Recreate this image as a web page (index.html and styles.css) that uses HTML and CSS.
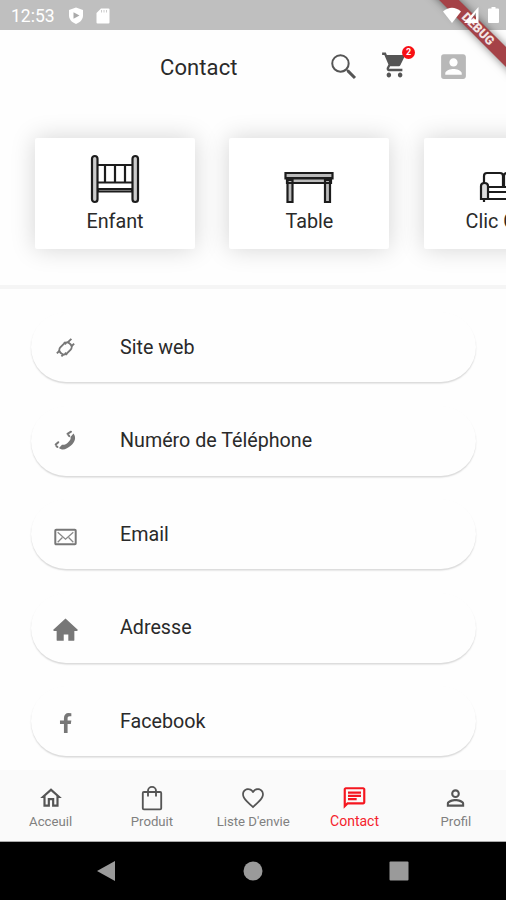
FILE: index.html
```html
<!DOCTYPE html>
<html lang="fr">
<head>
    <meta charset="UTF-8">
    <meta name="viewport" content="width=device-width, initial-scale=1.0">
    <title>Contact</title>
    <link rel="stylesheet" href="styles.css">
</head>
<body>
    <div class="screen">
        <!-- Status bar -->
        <div class="status-bar">
            <span class="time">12:53</span>
            <svg class="shield" viewBox="0 0 16 18"><path fill="#fff" d="M8 0.5 15 3v5.500c0 4-3 7-7 8.500-4-1.500-7-4.500-7-8.500V3z"/><path fill="#aaa" d="M5.500 5.300v6.400L11.500 8.500z"/></svg>
            <svg class="sd" viewBox="0 0 14 16"><path fill="#fff" d="M5 .5h7.500q1 0 1 1v13q0 1-1 1h-11q-1 0-1-1V5z"/><path stroke="#ccc" stroke-width="1" d="M5.500 2v2.500M8 2v2.500M10.500 2v2.500"/></svg>
        </div>
        <div class="debug">DEBUG</div>
        <svg class="signals" viewBox="0 0 60 20">
            <path fill="#fff" d="M0 5.500Q9 -2 18 5.500L9 17z"/>
            <path fill="#fff" fill-rule="evenodd" d="M35.500 1v16H21zM33 6.500v7H28z"/>
            <path fill="#fff" d="M46 2.500h2.500V1h4v1.500H55q1 0 1 1V16q0 1-1 1h-9q-1 0-1-1V3.500q0-1 1-1z"/>
        </svg>

        <!-- Header -->
        <header class="header">
            <h1>Contact</h1>
            <svg class="search" viewBox="0 0 24 24"><path d="M15.500 14h-.79l-.28-.27A6.470 6.470 0 0 0 16 9.500 6.500 6.500 0 1 0 9.500 16c1.610 0 3.090-.59 4.230-1.570l.27.28v.79l5 4.990L20.490 19l-4.990-5zm-6 .6a5.100 5.100 0 1 1 0-10.200 5.100 5.100 0 0 1 0 10.200z"/></svg>
            <div class="cart">
                <svg viewBox="0 0 24 24" preserveAspectRatio="none"><path d="M7 18c-1.100 0-1.990.9-1.990 2S5.900 22 7 22s2-.9 2-2-.9-2-2-2zM1 2v2h2l3.600 7.590-1.350 2.450c-.16.28-.25.61-.25.96 0 1.100.9 2 2 2h12v-2H7.420c-.14 0-.25-.11-.25-.25l.03-.12.9-1.630h7.450c.75 0 1.410-.41 1.750-1.030l3.580-6.490A1 1 0 0 0 20 4H5.210l-.94-2H1zm16 16c-1.100 0-1.990.9-1.990 2s.89 2 1.990 2 2-.9 2-2-.9-2-2-2z"/></svg>
                <span class="badge">2</span>
            </div>
            <svg class="account" viewBox="0 0 24 24"><path d="M3 5v14a2 2 0 0 0 2 2h14c1.100 0 2-.9 2-2V5c0-1.100-.9-2-2-2H5a2 2 0 0 0-2 2zm12 4c0 1.660-1.340 3-3 3s-3-1.340-3-3 1.340-3 3-3 3 1.340 3 3zm-9 8c0-2 4-3.100 6-3.100s6 1.100 6 3.100v1H6v-1z"/></svg>
        </header>

        <!-- Categories -->
        <section class="categories">
            <div class="category">
                <svg viewBox="0 0 50 50" fill="#ccc" stroke="#1c1c1c" stroke-width="2.200">
                    <path fill="none" d="M8 11h34M8 28.500h34M15 11v17M25 11v17M35 11v17"/>
                    <path d="M8 35h34v2.500H8z"/>
                    <rect x="2" y="2" width="5.500" height="46" rx="2.750"/>
                    <rect x="42.500" y="2" width="5.500" height="46" rx="2.750"/>
                </svg>
                <span>Enfant</span>
            </div>
            <div class="category">
                <svg viewBox="0 0 50 50" fill="#bbb" stroke="#1c1c1c" stroke-width="2.200">
                    <path d="M3.500 26h5v22h-5zM41 26h5v22h-5zM3 24h44v5H3zM1.500 19h47v5.500h-47z"/>
                </svg>
                <span>Table</span>
            </div>
            <div class="category">
                <svg viewBox="0 0 50 50" fill="#fff" stroke="#1c1c1c" stroke-width="2.200">
                    <path d="M5 34V22q0-3 3-3h13q3 0 3 3v12M25 34V22q0-3 3-3h13q4 0 4 4v11M8 33h34v5H8zM8 38h34v7H8zM5 45v3M45 45v3"/>
                    <path fill="#ddd" d="M2 45V32q0-3 3.500-3T9 32v13zM41 45V32q0-3 3.500-3T48 32v13z"/>
                </svg>
                <span>Clic Clac</span>
            </div>
        </section>

        <!-- Contact list -->
        <main class="list">
            <div class="item">
                <svg viewBox="0 0 25 25"><g transform="rotate(45 12.500 11.500)" fill="none" stroke="#777" stroke-width="1.900"><rect x="8" y="5" width="9" height="13" rx="4"/><path d="M9.800 6V0.500M15.200 6V2M9.800 17v4M15.200 17v3M7 8h3M15 15h3"/></g></svg>
                <span>Site web</span>
            </div>
            <div class="item">
                <svg viewBox="0 0 25 25"><path d="M20.500 3.500c3 4 1.500 8.500-2.500 12-4 3.500-8.500 5.500-12 2.500l3-3.300c2 .6 4.300-.6 6-2.200 2-1.900 3.200-3.700 2.500-5.500z"/><path fill="none" stroke="#777" stroke-width="2" stroke-linecap="round" d="M14.500 3.800 18 1.700M2.700 14.500l2.600-2.300M15.500 5.300l.8.800M3.500 16.200l1 .8"/></svg>
                <span>Numéro de Téléphone</span>
            </div>
            <div class="item">
                <svg viewBox="0 0 24 24"><path fill="none" stroke="#777" stroke-width="1.900" d="M3 5.500h18q.8 0 .8.800v12.400q0 .8-.8.800H3q-.8 0-.8-.8V6.300q0-.8.8-.8z"/><path fill="none" stroke="#888" stroke-width="1.200" d="m4.500 8 7.500 6.500L19.500 8M4.500 17.500 9 13M19.500 17.500 15 13"/></svg>
                <span>Email</span>
            </div>
            <div class="item">
                <svg viewBox="0 0 24 24"><path d="M12 1.500 24 12.500l-1 1h-2.500v8.500q0 .8-.8.800h-5v-6h-4.400v6h-6q-.8 0-.8-.8v-8.500H1l-1-1z"/></svg>
                <span>Adresse</span>
            </div>
            <div class="item">
                <svg viewBox="0 0 24 24"><path d="M10.500 21v-8.500H6.700V9.200h3.800V7C10.500 3.700 12.300 1.800 14.800 1.800q1.500 0 2.800.3v2.900h-1.500c-1.500 0-2.100.7-2.100 1.900v2.300h3.600l-.5 3.300H14V21z"/></svg>
                <span>Facebook</span>
            </div>
        </main>

        <!-- Bottom tabs -->
        <nav class="tabs">
            <a class="tab">
                <svg viewBox="0 0 24 24"><path d="m12 5.690 5 4.500V18h-2v-6H9v6H7v-7.810l5-4.500M12 3 2 12h3v8h6v-6h2v6h6v-8h3L12 3z"/></svg>
                <span>Acceuil</span>
            </a>
            <a class="tab">
                <svg viewBox="0 0 24 24"><path fill="none" stroke="#555" stroke-width="1.700" d="M4.500 6.500h15q1 0 1 1v14q0 1-1 1h-15q-1 0-1-1v-14q0-1 1-1zM8.300 10.500V5.500a3.700 3.700 0 0 1 7.400 0v5"/></svg>
                <span>Produit</span>
            </a>
            <a class="tab">
                <svg class="heart" viewBox="0 0 24 24"><path d="M16.500 3c-1.740 0-3.410.81-4.500 2.090C10.910 3.810 9.240 3 7.500 3 4.420 3 2 5.420 2 8.500c0 3.780 3.400 6.860 8.550 11.540L12 21.350l1.450-1.320C18.600 15.360 22 12.280 22 8.500 22 5.420 19.580 3 16.500 3zm-4.400 16.150-.1.100-.1-.1C6.740 14.440 3.600 11.390 3.600 8.500c0-2.200 1.700-3.900 3.900-3.900 1.540 0 3.240.99 3.770 2.560h1.470C13.260 5.590 14.960 4.600 16.500 4.600c2.200 0 3.900 1.700 3.900 3.900 0 2.890-3.140 5.940-8.300 10.650z"/></svg>
                <span>Liste D'envie</span>
            </a>
            <a class="tab active">
                <svg viewBox="0 0 24 24"><path d="M4 4h16v12H5.170L4 17.170V4m0-2c-1.100 0-1.990.9-1.990 2L2 22l4-4h14c1.100 0 2-.9 2-2V4c0-1.100-.9-2-2-2H4zm2 10h8v2H6v-2zm0-3h12v2H6V9zm0-3h12v2H6V6z"/></svg>
                <span>Contact</span>
            </a>
            <a class="tab">
                <svg class="person" viewBox="0 0 24 24"><path d="M12 5.900a2.100 2.100 0 1 1 0 4.200 2.100 2.100 0 0 1 0-4.200m0 9c2.970 0 6.100 1.460 6.100 2.100v1.100H5.900V17c0-.64 3.130-2.100 6.100-2.100M12 4a4 4 0 1 0 0 8 4 4 0 0 0 0-8zm0 9c-2.670 0-8 1.340-8 4v3h16v-3c0-2.660-5.330-4-8-4z"/></svg>
                <span>Profil</span>
            </a>
        </nav>

        <!-- Android buttons -->
        <div class="system">
            <svg viewBox="0 0 20 22"><path d="M18 1v20L0 11z"/></svg>
            <svg viewBox="0 0 20 22"><circle cx="10" cy="11" r="9.500"/></svg>
            <svg viewBox="0 0 20 22"><rect x="0.500" y="1.500" width="19" height="19" rx="1"/></svg>
        </div>
    </div>
</body>
</html>
```
FILE: styles.css
```css
* {
    box-sizing: border-box;
}
body {
    margin: 0;
    font-family: Roboto, sans-serif;
    color: #2a2a2a;
    background: #fefefe;
}
svg {
    display: block;
    flex-shrink: 0;
}
.screen {
    position: relative;
    display: flex;
    flex-direction: column;
    width: 506px;
    height: 900px;
    overflow: hidden;
}
.status-bar {
    display: flex;
    align-items: center;
    height: 30px;
    padding: 1px 0 0 11px;
    background: #bfbfbf;
    color: #fff;
    font-size: 17.5px;
}
.time {
    width: 57px;
}
.shield {
    width: 16px;
    height: 18px;
}
.sd {
    width: 14px;
    height: 16px;
    margin-left: 12px;
}
/* Corner ribbon, over the bars */
.debug {
    position: absolute;
    top: 22px;
    left: 418px;
    width: 120px;
    height: 14px;
    transform: rotate(45deg);
    background: #a54247;
    box-shadow: 0 0 8px rgba(0, 0, 0, 0.5);
    color: #f3e4e4;
    font-size: 12.5px;
    font-weight: 900;
    line-height: 14px;
    text-align: center;
}
.signals {
    position: absolute;
    top: 6px;
    left: 443px;
    width: 60px;
    height: 20px;
}
.header {
    display: flex;
    align-items: center;
    height: 75px;
    padding-left: 160px;
}
h1 {
    width: 167px;
    margin: 0;
    font-size: 22px;
    font-weight: 400;
    letter-spacing: 0.1px;
}
.search {
    width: 34px;
    height: 34px;
    margin-top: -1px;
    fill: #555;
}
.cart {
    position: relative;
    margin: -5px 0 0 20px;
}
.cart svg {
    width: 27px;
    height: 30px;
    fill: #555;
}
.badge {
    position: absolute;
    top: -4px;
    left: 21px;
    width: 13px;
    height: 13px;
    border-radius: 50%;
    background: #f80f14;
    color: #fff;
    font-size: 9px;
    font-weight: 700;
    line-height: 13px;
    text-align: center;
}
.account {
    width: 33px;
    height: 33px;
    margin: -2px 0 0 29px;
    fill: #b8b8b8;
}
.categories {
    display: flex;
    gap: 34.400px;
    height: 180px;
    padding: 33px 0 0 35px;
    overflow: hidden;
    flex-shrink: 0;
}
.category {
    display: flex;
    flex-direction: column;
    align-items: center;
    flex: 0 0 160px;
    height: 111px;
    padding-top: 16px;
    border-radius: 2px;
    background: #fff;
    box-shadow: 0 0 25px rgba(0, 0, 0, 0.17);
    font-size: 19.800px;
}
.category svg {
    width: 50px;
    height: 50px;
}
.category span {
    margin-top: 6px;
}
.list {
    display: flex;
    flex-direction: column;
    gap: 23.500px;
    height: 485px;
    padding: 23px 30px 0 31px;
    border-top: 4px solid #f5f5f5;
    overflow: hidden;
}
.item {
    display: flex;
    align-items: center;
    flex: 0 0 70px;
    padding-left: 22px;
    border-radius: 35px;
    background: #fefefe;
    box-shadow: 0 1.500px 1.500px rgba(0, 0, 0, 0.15);
    font-size: 19.700px;
}
.item svg {
    width: 25px;
    height: 25px;
    margin-top: 4px;
    fill: #777;
}
.item span {
    margin-left: 42px;
}
.tabs {
    display: flex;
    height: 72px;
    border-bottom: 1px solid #aaa;
    background: #fafafa;
}
.tab {
    display: flex;
    flex-direction: column;
    align-items: center;
    flex: 0 0 101.300px;
    padding-top: 15px;
    color: #808080;
    font-size: 13.200px;
}
.tab svg {
    width: 26px;
    height: 26px;
    fill: #555;
}
.tab span {
    margin-top: 3px;
    white-space: nowrap;
}
.tab .heart {
    width: 28px;
    height: 26px;
}
.tab .person {
    width: 29px;
    height: 26px;
}
.tab.active {
    color: #f5222d;
    font-size: 14px;
}
.tab.active svg {
    width: 29px;
    fill: #f5161f;
}
.tab.active span {
    margin-top: 2px;
}
.system {
    display: flex;
    justify-content: center;
    align-items: center;
    gap: 126px;
    height: 58px;
    background: #000;
}
.system svg {
    width: 20px;
    height: 22px;
    fill: #9a9a9a;
}
```
